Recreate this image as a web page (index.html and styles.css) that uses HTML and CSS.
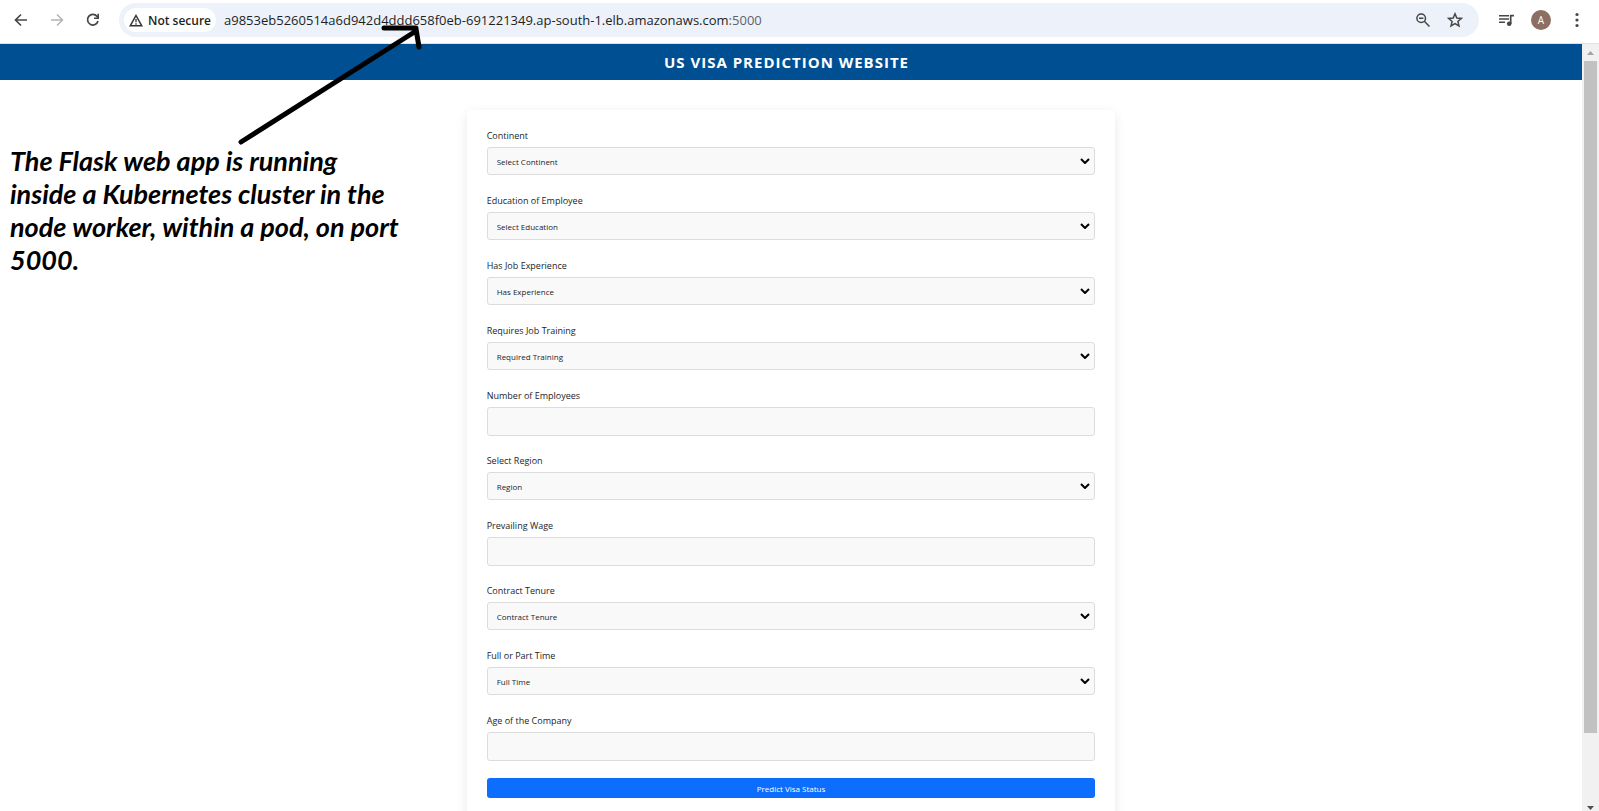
FILE: index.html
```html
<!DOCTYPE html>
<html lang="en">
<head>
<meta charset="utf-8">
<title>US Visa Prediction Website</title>
<link rel="stylesheet" href="styles.css">
</head>
<body>
<div class="browser">
  <div class="toolbar">
    <button class="tool" type="button" aria-label="Back"><svg width="14" height="14" viewBox="0 0 14 14"><path d="M13 7H2M7 1.5 1.5 7 7 12.5" fill="none" stroke="#474747" stroke-width="1.7"/></svg></button>
    <button class="tool" type="button" aria-label="Forward"><svg width="14" height="14" viewBox="0 0 14 14"><path d="M1 7h11M7 1.5 12.5 7 7 12.5" fill="none" stroke="#b4b4b4" stroke-width="1.5"/></svg></button>
    <button class="tool" type="button" aria-label="Reload"><svg width="14" height="14" viewBox="0 0 14 14"><path d="M12 8A5.3 5.3 0 1 1 11 3.4L12.4 5" fill="none" stroke="#474747" stroke-width="1.7"/><path d="M13 .8V6H8V4.4h3.4V.8z" fill="#474747"/></svg></button>
    <div class="omnibox">
      <button class="chip" type="button"><svg width="14" height="13" viewBox="0 0 14 13"><path d="M7 1.5 12.8 11.8H1.2z" fill="none" stroke="#333" stroke-width="1.5"/><path d="M7 5v3.2M7 9.2v1.5" stroke="#333" stroke-width="1.3"/></svg>Not secure</button>
      <div class="url">a9853eb5260514a6d942d4ddd658f0eb-691221349.ap-south-1.elb.amazonaws.com<span class="port">:5000</span></div>
      <button class="tool" type="button" aria-label="Zoom"><svg width="14" height="14" viewBox="0 0 14 14"><circle cx="5.2" cy="5.2" r="4.3" fill="none" stroke="#474747" stroke-width="1.5"/><path d="M3 5.2h4.4M8.3 8.3l5.2 5.2" stroke="#474747" stroke-width="1.5"/></svg></button>
      <button class="tool" type="button" aria-label="Bookmark"><svg width="16" height="16" viewBox="0 0 16 16"><path d="M8 1.8 9.8 6l4.6.4-3.5 3 1.1 4.5L8 11.5l-4 2.4 1.1-4.5-3.5-3L6.2 6z" fill="none" stroke="#474747" stroke-width="1.5"/></svg></button>
    </div>
    <button class="tool media" type="button" aria-label="Media controls"><svg width="16" height="13" viewBox="0 0 16 13"><path d="M0 1.700h10M0 5h10M0 8.300h6" stroke="#474747" stroke-width="1.600"/><path d="M11.700 10V1.700H15" fill="none" stroke="#474747" stroke-width="1.700"/><circle cx="10.200" cy="9.700" r="2.300" fill="#474747"/></svg></button>
    <button class="avatar" type="button">A</button>
    <button class="tool" type="button" aria-label="Menu"><svg width="4" height="16" viewBox="0 0 4 16"><g fill="#474747"><circle cx="2" cy="2.500" r="1.600"/><circle cx="2" cy="8" r="1.600"/><circle cx="2" cy="13.500" r="1.600"/></g></svg></button>
  </div>
  <div class="window">
    <div class="page">
      <header class="banner"><h1>US VISA PREDICTION WEBSITE</h1></header>
      <form class="card">
        <div class="fields">
          <div class="field"><label for="continent">Continent</label><div class="picker"><select id="continent"><option>Select Continent</option></select><svg class="chevron" width="10" height="6" viewBox="0 0 10 6"><path d="M1 1l4 4 4-4" fill="none" stroke="#000" stroke-width="2"/></svg></div></div>
          <div class="field"><label for="education">Education of Employee</label><div class="picker"><select id="education"><option>Select Education</option></select><svg class="chevron" width="10" height="6" viewBox="0 0 10 6"><path d="M1 1l4 4 4-4" fill="none" stroke="#000" stroke-width="2"/></svg></div></div>
          <div class="field"><label for="experience">Has Job Experience</label><div class="picker"><select id="experience"><option>Has Experience</option></select><svg class="chevron" width="10" height="6" viewBox="0 0 10 6"><path d="M1 1l4 4 4-4" fill="none" stroke="#000" stroke-width="2"/></svg></div></div>
          <div class="field"><label for="training">Requires Job Training</label><div class="picker"><select id="training"><option>Required Training</option></select><svg class="chevron" width="10" height="6" viewBox="0 0 10 6"><path d="M1 1l4 4 4-4" fill="none" stroke="#000" stroke-width="2"/></svg></div></div>
          <div class="field"><label for="employees">Number of Employees</label><input id="employees" type="text"></div>
          <div class="field"><label for="region">Select Region</label><div class="picker"><select id="region"><option>Region</option></select><svg class="chevron" width="10" height="6" viewBox="0 0 10 6"><path d="M1 1l4 4 4-4" fill="none" stroke="#000" stroke-width="2"/></svg></div></div>
          <div class="field"><label for="wage">Prevailing Wage</label><input id="wage" type="text"></div>
          <div class="field"><label for="tenure">Contract Tenure</label><div class="picker"><select id="tenure"><option>Contract Tenure</option></select><svg class="chevron" width="10" height="6" viewBox="0 0 10 6"><path d="M1 1l4 4 4-4" fill="none" stroke="#000" stroke-width="2"/></svg></div></div>
          <div class="field"><label for="fulltime">Full or Part Time</label><div class="picker"><select id="fulltime"><option>Full Time</option></select><svg class="chevron" width="10" height="6" viewBox="0 0 10 6"><path d="M1 1l4 4 4-4" fill="none" stroke="#000" stroke-width="2"/></svg></div></div>
          <div class="field"><label for="age">Age of the Company</label><input id="age" type="text"></div>
        </div>
        <button class="submit" type="submit">Predict Visa Status</button>
      </form>
    </div>
    <div class="scrollbar">
      <svg width="7" height="4" viewBox="0 0 7 4"><path d="M0 4 3.500 0 7 4z" fill="#a3a3a3"/></svg>
      <div class="track"><div class="thumb"></div></div>
      <svg width="7" height="4" viewBox="0 0 7 4"><path d="M0 0h7L3.500 4z" fill="#505050"/></svg>
    </div>
  </div>
  <svg class="arrow" width="186" height="124" viewBox="0 0 186 124"><path d="M3 120 178 9M146 6h32M178 7l3 18" fill="none" stroke="#000" stroke-width="5" stroke-linecap="round" stroke-linejoin="round"/></svg>
  <p class="note">The Flask web app is running<br>inside a Kubernetes cluster in the<br>node worker, within a pod, on port<br>5000.</p>
</div>
</body>
</html>
```

FILE: styles.css
```css
* { box-sizing: border-box; }
body { margin: 0; font-family: "Open Sans", "Noto Sans", sans-serif; color: #212529; background: #fff; }
button { font-family: inherit; border: 0; padding: 0; background: none; }
svg { display: block; flex: none; }

.browser { position: relative; display: flex; flex-direction: column; height: 100vh; overflow: hidden; }

.toolbar { display: flex; align-items: center; gap: 12px; padding: 3px 10px 6px 9px; border-bottom: 1px solid #dfe1e5; }
.tool { display: flex; align-items: center; justify-content: center; width: 24px; height: 24px; }
.omnibox { flex: 1; display: flex; align-items: center; gap: 8px; height: 34px; margin-left: 2px; padding: 0 12px 0 5px; border-radius: 17px; background: #ecf1fa; }
.chip { display: flex; align-items: center; gap: 5px; height: 24px; padding: 0 5px; border-radius: 12px; background: #fff; color: #1f1f1f; font-size: 12px; font-weight: 600; }
.url { flex: 1; color: #1f1f1f; font-size: 13px; white-space: nowrap; }
.port { color: #5f6368; }
.media { margin-left: 4px; }
.avatar { width: 20px; height: 20px; margin-right: 2px; border-radius: 50%; background: #8d6e63; color: #fff; font-size: 10px; }

.window { flex: 1; display: flex; min-height: 0; }
.page { flex: 1; overflow: hidden; }
.banner { padding: 8px 9px 8px 0; background: #004f92; text-align: center; }
.banner h1 { margin: 0; color: #fff; font-size: 15px; line-height: 20px; font-weight: 700; letter-spacing: 1px; }

.card { width: 41%; margin: 30px auto 0; padding: 20px 20px 30px; border-radius: 5px; background: #fff; box-shadow: 0 3px 12px rgba(0, 0, 0, 0.09); }
.fields { display: grid; grid-auto-rows: 46px; gap: 19px; }
.field label { display: block; height: 17px; font-size: 9px; line-height: 12px; }
.picker { display: grid; align-items: center; }
.picker select, .chevron { grid-area: 1 / 1; }
.chevron { justify-self: end; margin-right: 5px; pointer-events: none; }
.field select, .field input { display: block; width: 100%; height: 28px; padding: 0 9px; border: 1px solid #dcdcdc; border-radius: 3px; background: #f9f9f9; color: #212529; font-family: inherit; font-size: 8px; appearance: none; }
.field input { height: 29px; }
.submit { display: block; width: 100%; height: 20px; margin-top: 17px; border-radius: 3px; background: #0d6efd; color: #fff; font-size: 8px; }

.scrollbar { display: flex; flex-direction: column; align-items: center; width: 17px; padding: 7px 0 1px; background: #f1f1f1; }
.track { flex: 1; width: 13px; padding: 6px 0; }
.thumb { height: 91%; background: #c1c1c1; }

.arrow { position: absolute; left: 238px; top: 22px; }
.note { position: absolute; left: 10px; top: 144px; margin: 0; color: #000; font-family: Lato, sans-serif; font-size: 27px; line-height: 33px; font-weight: 700; font-style: italic; white-space: nowrap; }
```
